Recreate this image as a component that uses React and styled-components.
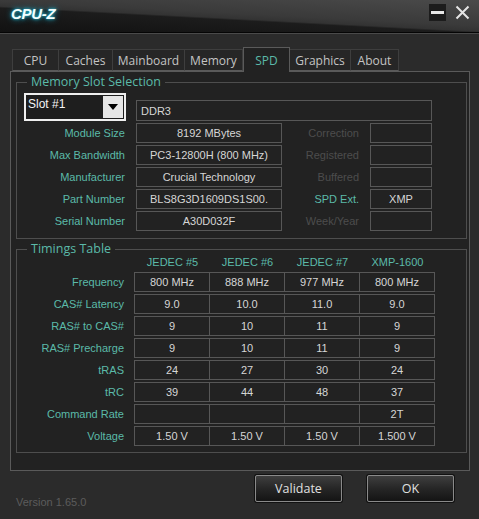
import React from "react";
import styled, { createGlobalStyle } from "styled-components";

const GlobalStyle = createGlobalStyle`
  html, body {
    margin: 0;
    padding: 0;
    background: #2b2b2b;
  }
  * {
    box-sizing: border-box;
  }
`;

const teal = "#5bbaa9";

const Window = styled.div`
  width: 479px;
  height: 519px;
  background: #2b2b2b;
  display: flex;
  flex-direction: column;
  font-family: "Liberation Sans", Arial, sans-serif;
  overflow: hidden;
`;

const TitleBar = styled.div`
  height: 34px;
  display: flex;
  align-items: flex-start;
  padding: 5px 8px 0 11px;
  border-bottom: 1px solid #4a4a4a;
  box-shadow: inset 0 -1px 0 #050505;
  background: linear-gradient(
    183deg,
    #4a4a4a 0%,
    #3a3a3a 45%,
    #333333 54%,
    #1c1c1c 57%,
    #161616 80%,
    #111111 100%
  );
`;

const Logo = styled.div`
  font-size: 15px;
  font-weight: bold;
  font-style: italic;
  color: #f2ffff;
  line-height: 18px;
  letter-spacing: -0.3px;
  text-shadow: 0 0 3px #26c9e0, 0 0 6px #1a9fbf;
`;

const WinButtons = styled.div`
  margin-left: auto;
  display: flex;
  gap: 8px;
  margin-top: -1px;
`;

const WinButton = styled.div`
  width: 17px;
  height: 17px;
  display: flex;
  align-items: center;
  justify-content: center;
  background: ${(p) => (p.$boxed ? "#1c1c1c" : "transparent")};
`;

const Body = styled.div`
  padding: 13px 9px 0 10px;
  display: flex;
  flex-direction: column;
`;

const TabRow = styled.div`
  height: 24px;
  display: flex;
  align-items: flex-end;
  padding-left: 2px;
  position: relative;
  z-index: 1;
`;

const Tab = styled.div`
  width: ${(p) => p.$w}px;
  height: ${(p) => (p.$active ? 25 : 22)}px;
  margin-bottom: ${(p) => (p.$active ? -1 : 0)}px;
  border: 1px solid ${(p) => (p.$active ? "#5a5a5a" : "#3e3e3e")};
  border-bottom: ${(p) => (p.$active ? "none" : "1px solid #5a5a5a")};
  border-left-width: ${(p) => (p.$first || p.$active ? 1 : 0)}px;
  background: ${(p) => (p.$active ? "#222222" : "#262626")};
  color: ${(p) => (p.$active ? teal : "#c4c4c4")};
  font-family: "Open Sans", "Noto Sans", sans-serif;
  font-size: 12px;
  display: flex;
  align-items: center;
  justify-content: center;
  padding-top: ${(p) => (p.$active ? 0 : 1)}px;
`;

const Panel = styled.div`
  height: 400px;
  background: #222222;
  border: 1px solid #5a5a5a;
  padding: 3px 2px 0 5px;
  display: flex;
  flex-direction: column;
  gap: 3px;
`;

const Group = styled.fieldset`
  margin: 0;
  min-width: 0;
  border: 1px solid #4e4e4e;
  padding: ${(p) => p.$pt}px 0 ${(p) => p.$pb}px 7px;
`;

const Legend = styled.legend`
  margin-left: 3px;
  padding: 0 4px;
  color: ${teal};
  font-family: "Open Sans", "Noto Sans", sans-serif;
  font-size: 12.5px;
  line-height: 14px;
`;

const SlotGrid = styled.div`
  display: grid;
  grid-template-columns: 101px 146px 66px 62px;
  column-gap: 11px;
  row-gap: 2px;
  margin-top: -2px;
`;

const SlotSelect = styled.div`
  height: 28px;
  border: 2px solid #efefef;
  background: #1e1e1e;
  display: flex;
  margin-right: -1px;
`;

const SlotText = styled.div`
  flex: 1;
  color: #f4f4f4;
  font-size: 12px;
  padding: 2px 0 0 2px;
`;

const SlotArrow = styled.div`
  width: 20px;
  margin: 1px;
  background: #e6e6e6;
  display: flex;
  align-items: center;
  justify-content: center;
`;

const Field = styled.div`
  height: ${(p) => p.$h || 20}px;
  border: 1px solid #575757;
  color: #d6d6d6;
  font-size: 11px;
  display: flex;
  align-items: center;
  justify-content: ${(p) => (p.$left ? "flex-start" : "center")};
  padding: 0 4px;
  white-space: nowrap;
  overflow: hidden;
  grid-column: ${(p) => p.$span || "auto"};
  align-self: end;
`;

const Label = styled.div`
  color: ${(p) => (p.$dim ? "#4d4d4d" : teal)};
  font-size: 11px;
  text-align: right;
  align-self: center;
  white-space: nowrap;
`;

const TimingRow = styled.div`
  display: flex;
  align-items: ${(p) => (p.$head ? "flex-start" : "center")};
  height: ${(p) => (p.$head ? 13 : 20)}px;
  margin-bottom: 2px;
`;

const RowLabel = styled.div`
  width: 100px;
  margin-right: 11px;
  color: ${teal};
  font-size: 11px;
  text-align: right;
  white-space: nowrap;
`;

const Cell = styled.div`
  width: 76px;
  height: 20px;
  margin-left: -1px;
  border: 1px solid #575757;
  color: #d6d6d6;
  font-size: 11px;
  display: flex;
  align-items: center;
  justify-content: center;
  &:first-of-type {
    margin-left: 0;
  }
`;

const HeadCell = styled.div`
  width: 75px;
  color: ${teal};
  font-size: 11px;
  line-height: 11px;
  text-align: center;
`;

const Footer = styled.div`
  flex: 1;
  display: flex;
  align-items: flex-start;
  padding: 4px 25px 0 16px;
`;

const Version = styled.div`
  color: #5c5c5c;
  font-size: 11px;
  line-height: 13px;
  margin-top: 21px;
`;

const Buttons = styled.div`
  margin-left: auto;
  display: flex;
  gap: 25px;
`;

const Button = styled.div`
  width: 87px;
  height: 27px;
  border: 1px solid #8a8a8a;
  border-radius: 2px;
  box-shadow: 0 0 0 1px #111;
  background: linear-gradient(180deg, #3e3e3e 0%, #262626 50%, #141414 100%);
  color: #e0e0e0;
  font-family: "Open Sans", "Noto Sans", sans-serif;
  font-size: 12.5px;
  display: flex;
  align-items: center;
  justify-content: center;
`;

const tabs = [
  { name: "CPU", w: 47 },
  { name: "Caches", w: 54 },
  { name: "Mainboard", w: 72 },
  { name: "Memory", w: 58 },
  { name: "SPD", w: 47, active: true },
  { name: "Graphics", w: 61 },
  { name: "About", w: 48 },
];

const slotRows = [
  ["Module Size", "8192 MBytes", "Correction", "", true],
  ["Max Bandwidth", "PC3-12800H (800 MHz)", "Registered", "", true],
  ["Manufacturer", "Crucial Technology", "Buffered", "", true],
  ["Part Number", "BLS8G3D1609DS1S00.", "SPD Ext.", "XMP", false],
  ["Serial Number", "A30D032F", "Week/Year", "", true],
];

const heads = ["JEDEC #5", "JEDEC #6", "JEDEC #7", "XMP-1600"];

const timings = [
  ["Frequency", ["800 MHz", "888 MHz", "977 MHz", "800 MHz"]],
  ["CAS# Latency", ["9.0", "10.0", "11.0", "9.0"]],
  ["RAS# to CAS#", ["9", "10", "11", "9"]],
  ["RAS# Precharge", ["9", "10", "11", "9"]],
  ["tRAS", ["24", "27", "30", "24"]],
  ["tRC", ["39", "44", "48", "37"]],
  ["Command Rate", ["", "", "", "2T"]],
  ["Voltage", ["1.50 V", "1.50 V", "1.50 V", "1.500 V"]],
];

const App = () => {
  return (
    <Window>
      <GlobalStyle />
      <TitleBar>
        <Logo>CPU-Z</Logo>
        <WinButtons>
          <WinButton $boxed>
            <svg width="13" height="13" viewBox="0 0 13 13">
              <rect x="0" y="5" width="13" height="3" fill="#e8e8e8" />
            </svg>
          </WinButton>
          <WinButton>
            <svg width="15" height="15" viewBox="0 0 15 15">
              <path d="M1.5 1.5 L13.5 13.5 M13.5 1.5 L1.5 13.5" stroke="#e4e4e4" strokeWidth="2" />
            </svg>
          </WinButton>
        </WinButtons>
      </TitleBar>

      <Body>
        <TabRow>
          {tabs.map((t, i) => (
            <Tab key={t.name} $w={t.w} $active={t.active} $first={i === 0}>
              {t.name}
            </Tab>
          ))}
        </TabRow>

        <Panel>
          <Group $pt={6} $pb={7}>
            <Legend>Memory Slot Selection</Legend>
            <SlotGrid>
              <SlotSelect>
                <SlotText>Slot #1</SlotText>
                <SlotArrow>
                  <svg width="10" height="6" viewBox="0 0 10 6">
                    <path d="M0 0 L10 0 L5 6 Z" fill="#000" />
                  </svg>
                </SlotArrow>
              </SlotSelect>
              <Field $span="2 / 5" $left $h={21}>DDR3</Field>
              {slotRows.map(([label, value, label2, value2, dim]) => (
                <React.Fragment key={label}>
                  <Label>{label}</Label>
                  <Field>{value}</Field>
                  <Label $dim={dim}>{label2}</Label>
                  <Field>{value2}</Field>
                </React.Fragment>
              ))}
            </SlotGrid>
          </Group>

          <Group $pt={1} $pb={4}>
            <Legend>Timings Table</Legend>
            <TimingRow $head>
              <RowLabel />
              {heads.map((h) => (
                <HeadCell key={h}>{h}</HeadCell>
              ))}
            </TimingRow>
            {timings.map(([label, values]) => (
              <TimingRow key={label}>
                <RowLabel>{label}</RowLabel>
                {values.map((v, i) => (
                  <Cell key={i}>{v}</Cell>
                ))}
              </TimingRow>
            ))}
          </Group>
        </Panel>
      </Body>

      <Footer>
        <Version>Version 1.65.0</Version>
        <Buttons>
          <Button>Validate</Button>
          <Button>OK</Button>
        </Buttons>
      </Footer>
    </Window>
  );
};

export default App;
